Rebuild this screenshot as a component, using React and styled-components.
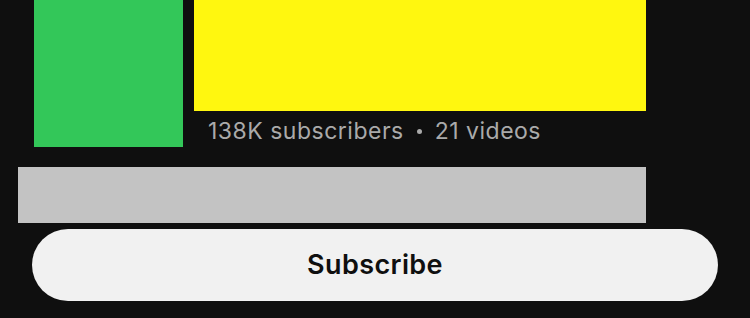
import React from "react"
import styled, { createGlobalStyle } from "styled-components"

const GlobalStyle = createGlobalStyle`
  html, body {
    margin: 0;
    padding: 0;
    background: #0f0f0f;
    font-family: Inter, "Noto Sans", sans-serif;
  }
`

const Page = styled.main`
  width: 750px;
  height: 318px;
  overflow: hidden;
  display: flex;
  flex-direction: column;
`

const TopRow = styled.section`
  display: flex;
  align-items: flex-start;
  gap: 11px;
  padding-left: 34px;
`

const Thumb = styled.div`
  width: 149px;
  height: 147px;
  background: #33c759;
`

const Info = styled.div`
  display: flex;
  flex-direction: column;
`

const Banner = styled.div`
  width: 452px;
  height: 111px;
  background: #fff70f;
`

const Meta = styled.p`
  margin: 6px 0 0 14px;
  color: #aaaaaa;
  font-size: 23px;
  letter-spacing: 0.5px;
  line-height: 28px;
  display: flex;
  align-items: center;
  gap: 13px;
`

const Dot = styled.span`
  width: 5px;
  height: 5px;
  border-radius: 50%;
  background: #aaaaaa;
`

const Bar = styled.div`
  margin: 20px 0 0 18px;
  width: 628px;
  height: 56px;
  background: #c3c3c3;
`

const SubscribeButton = styled.button`
  margin: 6px 0 0 32px;
  width: 686px;
  height: 72px;
  border: none;
  border-radius: 36px;
  background: #f1f1f1;
  color: #0f0f0f;
  font-family: Inter, "Noto Sans", sans-serif;
  font-size: 27px;
  letter-spacing: 0.4px;
  font-weight: 600;
  padding: 0 0 2px;
  cursor: pointer;
`

const App = () => (
  <Page>
    <GlobalStyle />
    <TopRow>
      <Thumb />
      <Info>
        <Banner />
        <Meta>
          <span>138K subscribers</span>
          <Dot />
          <span>21 videos</span>
        </Meta>
      </Info>
    </TopRow>
    <Bar />
    <SubscribeButton>Subscribe</SubscribeButton>
  </Page>
)

export default App
